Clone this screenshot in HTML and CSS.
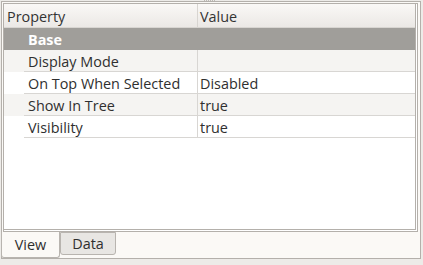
FILE: index.html
```html
<!DOCTYPE html>
<html>
<head>
<meta charset="utf-8">
<link rel="stylesheet" href="styles.css">
</head>
<body>
<div class="grip"></div>
<div class="pane">
  <div class="view">
    <div class="inner">
      <div class="header">
        <div class="hcell name">Property</div>
        <div class="hcell">Value</div>
      </div>
      <div class="group">Base</div>
      <div class="row alt">
        <div class="indent"></div>
        <div class="cell name">Display Mode</div>
        <div class="cell"></div>
      </div>
      <div class="row">
        <div class="indent"></div>
        <div class="cell name">On Top When Selected</div>
        <div class="cell">Disabled</div>
      </div>
      <div class="row alt">
        <div class="indent"></div>
        <div class="cell name">Show In Tree</div>
        <div class="cell">true</div>
      </div>
      <div class="row">
        <div class="indent"></div>
        <div class="cell name">Visibility</div>
        <div class="cell">true</div>
      </div>
    </div>
  </div>
  <div class="tabs">
    <div class="tab active">View</div>
    <div class="tab">Data</div>
  </div>
</div>
</body>
</html>
```

FILE: styles.css
```css
html, body {
  margin: 0;
  padding: 0;
}
body {
  width: 423px;
  height: 265px;
  background: #edebe8;
  font-family: "Open Sans", "DejaVu Sans", sans-serif;
  font-size: 14.4px;
  color: #2f2f2f;
  position: relative;
  overflow: hidden;
}
.grip {
  position: absolute;
  left: 204px;
  top: 0;
  width: 11px;
  height: 0;
  border-top: 1px dotted #bdb9b4;
}
.pane {
  box-sizing: border-box;
  margin: 1px 0 0 1px;
  width: 420px;
  height: 258px;
  border: 1px solid #b4b0ab;
  background: #fbf9f6;
  padding: 1px 1px 0 1px;
  display: flex;
  flex-direction: column;
}
.view {
  box-sizing: border-box;
  width: 415px;
  height: 229px;
  border: 1px solid #b4b0ab;
  background: #fff;
  padding: 0 1px 1px 0;
}
.inner {
  box-sizing: border-box;
  height: 100%;
  border-right: 1px solid #b4b0ab;
  border-bottom: 1px solid #b4b0ab;
  background: #fff;
}
.header {
  box-sizing: border-box;
  height: 24px;
  display: grid;
  grid-template-columns: 194px 1fr;
  background: linear-gradient(#faf8f6, #ebe8e5);
  border-bottom: 1px solid #d8d5d1;
  color: #333;
}
.hcell {
  display: flex;
  align-items: center;
  padding: 2px 0 0 2px;
}
.hcell.name {
  padding-left: 3px;
  border-right: 1px solid #d8d5d1;
}
.group {
  box-sizing: border-box;
  height: 22px;
  background: #a09e9a;
  color: #fff;
  font-weight: bold;
  display: flex;
  align-items: center;
  padding: 1px 0 0 24px;
}
.row {
  height: 22px;
  display: grid;
  grid-template-columns: 20px 174px 1fr;
  background: #fff;
}
.row.alt {
  background: #f5f4f2;
}
.cell {
  box-sizing: border-box;
  border-bottom: 1px solid #d8d6d3;
  display: flex;
  align-items: center;
  padding: 1px 0 0 2px;
  white-space: nowrap;
}
.cell.name {
  padding-left: 4px;
  border-right: 1px solid #d8d6d3;
}
.tabs {
  display: flex;
  align-items: flex-start;
  margin-left: -2px;
}
.tab {
  box-sizing: border-box;
  height: 23px;
  width: 56px;
  border: 1px solid #b8b4af;
  border-radius: 0 0 3px 3px;
  background: #e8e6e3;
  display: flex;
  align-items: center;
  justify-content: center;
}
.tab.active {
  width: 59px;
  height: 26px;
  border-top: none;
  background: #fbf9f6;
}
```
